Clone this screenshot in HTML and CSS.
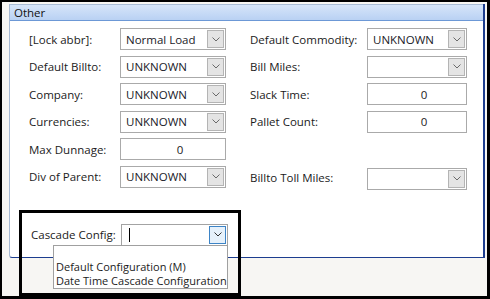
FILE: index.html
```html
<!DOCTYPE html>
<html lang="en">
<head>
  <meta charset="UTF-8" />
  <title>Other</title>
  <link rel="stylesheet" href="styles.css">
</head>
<body>

<div class="frame">
  <div class="group">
    <div class="group-head">Other</div>
    <div class="group-body">
      <div class="fields">
        <label class="lbl">[Lock abbr]:</label>
        <div class="combo"><span class="val">Normal Load</span><span class="btn"><svg width="8" height="5" viewBox="0 0 8 5"><path d="M0.5 0.5 L4 4 L7.5 0.5" /></svg></span></div>
        <label class="lbl lbl-right">Default Commodity:</label>
        <div class="combo"><span class="val">UNKNOWN</span><span class="btn"><svg width="8" height="5" viewBox="0 0 8 5"><path d="M0.5 0.5 L4 4 L7.5 0.5" /></svg></span></div>

        <label class="lbl">Default Billto:</label>
        <div class="combo"><span class="val">UNKNOWN</span><span class="btn"><svg width="8" height="5" viewBox="0 0 8 5"><path d="M0.5 0.5 L4 4 L7.5 0.5" /></svg></span></div>
        <label class="lbl lbl-right">Bill Miles:</label>
        <div class="combo"><span class="val"></span><span class="btn"><svg width="8" height="5" viewBox="0 0 8 5"><path d="M0.5 0.5 L4 4 L7.5 0.5" /></svg></span></div>

        <label class="lbl">Company:</label>
        <div class="combo"><span class="val">UNKNOWN</span><span class="btn"><svg width="8" height="5" viewBox="0 0 8 5"><path d="M0.5 0.5 L4 4 L7.5 0.5" /></svg></span></div>
        <label class="lbl lbl-right">Slack Time:</label>
        <div class="textbox">0</div>

        <label class="lbl">Currencies:</label>
        <div class="combo"><span class="val">UNKNOWN</span><span class="btn"><svg width="8" height="5" viewBox="0 0 8 5"><path d="M0.5 0.5 L4 4 L7.5 0.5" /></svg></span></div>
        <label class="lbl lbl-right">Pallet Count:</label>
        <div class="textbox">0</div>

        <label class="lbl">Max Dunnage:</label>
        <div class="textbox">0</div>
        <span></span>
        <span></span>

        <label class="lbl">Div of Parent:</label>
        <div class="combo"><span class="val">UNKNOWN</span><span class="btn"><svg width="8" height="5" viewBox="0 0 8 5"><path d="M0.5 0.5 L4 4 L7.5 0.5" /></svg></span></div>
        <label class="lbl lbl-right lbl-low">Billto Toll Miles:</label>
        <div class="combo combo-low"><span class="val"></span><span class="btn"><svg width="8" height="5" viewBox="0 0 8 5"><path d="M0.5 0.5 L4 4 L7.5 0.5" /></svg></span></div>
      </div>

      <div class="cascade-row">
        <label class="lbl">Cascade Config:</label>
        <div class="combo combo-open">
          <span class="val"><span class="caret"></span></span>
          <span class="btn"><svg width="8" height="5" viewBox="0 0 8 5"><path d="M0.5 0.5 L4 4 L7.5 0.5" /></svg></span>
          <ul class="popup">
            <li></li>
            <li>Default Configuration (M)</li>
            <li>Date Time Cascade Configuration</li>
          </ul>
        </div>
      </div>
    </div>
  </div>

  <!-- cadre de mise en évidence -->
  <div class="highlight"></div>
</div>

</body>
</html>
```

FILE: styles.css
```css
body {
  margin: 0;
  font-family: "Open Sans", "Noto Sans", sans-serif;
  font-size: 11.5px;
  color: #1b1b1b;
}
.frame {
  position: relative;
  width: 490px;
  height: 299px;
  box-sizing: border-box;
  border: 2px solid #000;
  border-right-width: 3px;
  border-bottom-width: 3px;
  background: #f7f6f3;
  padding: 2px 0 0 7px;
}
.group {
  width: 476px;
  height: 254px;
  box-sizing: border-box;
  background: #fff;
  border-left: 1px solid #a7b9d2;
  border-right: 2px solid #1c3d8f;
  border-bottom: 1px solid #1c3d8f;
  border-bottom-left-radius: 3px;
}
.group-head {
  height: 17px;
  box-sizing: border-box;
  line-height: 16px;
  padding-left: 4px;
  background: linear-gradient(#d6e5f9, #b9d1f3);
  border-top: 1px solid #a9bdd6;
  border-bottom: 1px solid #6c98d6;
  color: #111;
}
.group-body {
  padding: 7px 0 0 19px;
}
.fields {
  display: grid;
  grid-template-columns: 91px 106px 141px 100px;
  grid-auto-rows: 22px;
  row-gap: 5.5px;
}
.lbl {
  display: flex;
  align-items: center;
  white-space: nowrap;
}
.lbl-right {
  padding-left: 24px;
}
.lbl-low,
.combo-low {
  margin-top: 2px;
}
.combo,
.textbox {
  position: relative;
  box-sizing: border-box;
  height: 22px;
  border: 1px solid #aaaaaa;
  background: #fff;
  display: flex;
  align-items: center;
}
.combo .val {
  flex: 1;
  padding-left: 5px;
  white-space: nowrap;
  color: #1a1a28;
}
.combo .btn {
  width: 15px;
  height: 16px;
  margin-right: 1px;
  border: 1px solid #b4b4b4;
  background: #e4e4e4;
  display: flex;
  align-items: center;
  justify-content: center;
}
.combo .btn path {
  fill: none;
  stroke: #6a6a6a;
  stroke-width: 1;
}
.textbox {
  justify-content: center;
  padding-left: 14px;
}
/* Ligne Cascade Config */
.cascade-row {
  display: grid;
  grid-template-columns: 90px 107px;
  margin-top: 36px;
  padding-left: 2px;
  height: 22px;
}
.combo-open {
  border-color: #a3a3a3;
}
.combo-open .btn {
  border-color: #3d84c6;
  background: #e6f1fb;
}
.combo-open .btn path {
  stroke: #333;
}
.caret {
  display: inline-block;
  width: 1px;
  height: 14px;
  background: #000;
  vertical-align: middle;
  margin-left: 2px;
}
.popup {
  position: absolute;
  top: 20px;
  right: -1px;
  width: 175px;
  margin: 0;
  padding: 0;
  list-style: none;
  box-sizing: border-box;
  border: 1px solid #a0a0a0;
  background: #fff;
  font-size: 11px;
}
.popup li {
  height: 14px;
  line-height: 14px;
  padding-left: 2px;
  white-space: nowrap;
}
.highlight {
  position: absolute;
  left: 17px;
  top: 208px;
  width: 222px;
  height: 86px;
  box-sizing: border-box;
  border: 3px solid #000;
  pointer-events: none;
}
```
